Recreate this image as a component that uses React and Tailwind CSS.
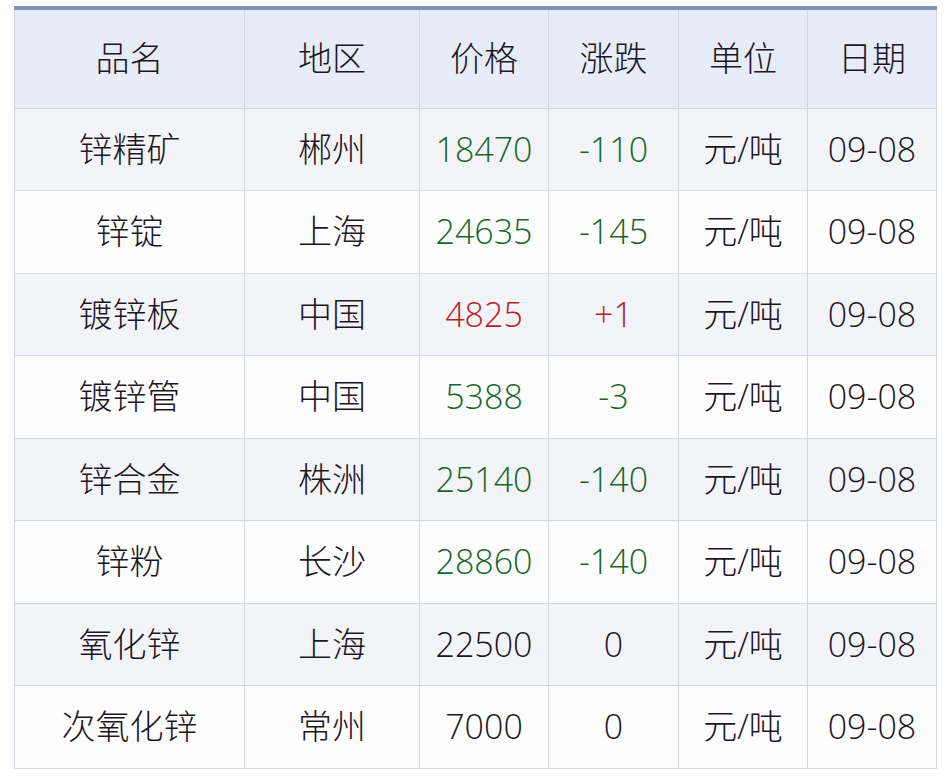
const rows = [
  ["锌精矿", "郴州", "18470", "-110", "g"],
  ["锌锭", "上海", "24635", "-145", "g"],
  ["镀锌板", "中国", "4825", "+1", "r"],
  ["镀锌管", "中国", "5388", "-3", "g"],
  ["锌合金", "株洲", "25140", "-140", "g"],
  ["锌粉", "长沙", "28860", "-140", "g"],
  ["氧化锌", "上海", "22500", "0", ""],
  ["次氧化锌", "常州", "7000", "0", ""],
];

const heads = ["品名", "地区", "价格", "涨跌", "单位", "日期"];
const widths = ["w-[230px]", "w-[175px]", "w-[129px]", "w-[130px]", "w-[129px]", "w-[129px]"];

function tone(t) {
  if (t === "g") return "text-[#17672b]";
  if (t === "r") return "text-[#b81d28]";
  return "text-[#1c1624]";
}

export default function App() {
  return (
    <div className="w-[950px] h-[778px] bg-white pt-[6px] pl-[14px] font-['Open_Sans','Noto_Sans_CJK_SC',sans-serif] font-light">
      <table className="table-fixed border-collapse border-t-[4px] border-t-[#8193b4] text-[34px] text-[#1c1624]">
        <colgroup>
          {widths.map((w, i) => (
            <col key={i} className={w} />
          ))}
        </colgroup>
        <thead>
          <tr className="h-[100px] bg-[#e7edf8]">
            {heads.map((h) => (
              <th key={h} className="border border-[#d3d7df] border-t-0 font-light text-center">
                {h}
              </th>
            ))}
          </tr>
        </thead>
        <tbody>
          {rows.map((r, i) => (
            <tr key={r[0]} className={i % 2 === 0 ? "h-[82.5px] bg-[#f3f4f8]" : "h-[82.5px] bg-[#fdfdfe]"}>
              <td className="border border-[#d3d7df] text-center">{r[0]}</td>
              <td className="border border-[#d3d7df] text-center">{r[1]}</td>
              <td className={"border border-[#d3d7df] text-center " + tone(r[4])}>{r[2]}</td>
              <td className={"border border-[#d3d7df] text-center " + tone(r[4])}>{r[3]}</td>
              <td className="border border-[#d3d7df] text-center">元/吨</td>
              <td className="border border-[#d3d7df] text-center">09-08</td>
            </tr>
          ))}
        </tbody>
      </table>
    </div>
  );
}
